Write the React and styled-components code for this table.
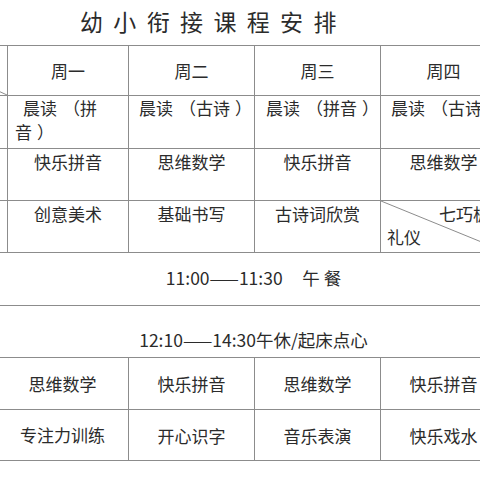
import React from "react";
import styled, { createGlobalStyle } from "styled-components";

const Global = createGlobalStyle`
  html, body { margin: 0; padding: 0; background: #fff; }
  body { width: 480px; height: 480px; overflow: hidden; }
  #root { width: 480px; height: 480px; overflow: hidden; }
`;

const LINE = "#8c8c8c";
const INK = "#2b2b2b";

const Page = styled.div`
  width: 507px;
  height: 480px;
  background: #fff;
  color: ${INK};
  font-family: "Noto Sans CJK SC", "Noto Sans", sans-serif;
`;

const Title = styled.h1`
  margin: 0;
  height: 45px;
  box-sizing: border-box;
  padding: 0 0 2px 80px;
  display: flex;
  align-items: center;
  font-size: 23px;
  font-weight: 400;
  letter-spacing: 2.6px;
  white-space: pre;
  line-height: 1;
`;

const Grid = styled.div`
  display: grid;
  grid-template-columns: ${(p) => p.$cols};
  grid-template-rows: ${(p) => p.$rows};
  border-top: ${(p) => (p.$top ? `1px solid ${LINE}` : "none")};
`;

const Cell = styled.div`
  box-sizing: border-box;
  border-right: 1px solid ${LINE};
  border-bottom: 1px solid ${LINE};
  font-size: 17px;
  line-height: 24px;
  display: flex;
  justify-content: ${(p) => (p.$left ? "flex-start" : "center")};
  align-items: ${(p) => (p.$middle ? "center" : "flex-start")};
  padding: ${(p) => p.$pad || "1px 0 0 0"};
  text-align: ${(p) => (p.$left ? "left" : "center")};
  white-space: nowrap;
  position: relative;
  overflow: hidden;
`;

const Lines = styled.div`
  text-indent: ${(p) => p.$indent || 0}px;
`;

const Paren = styled.span`
  padding-left: ${(p) => (p.$close ? 5 : 6)}px;
`;

const Diagonal = styled.svg`
  position: absolute;
  inset: 0;
  width: 100%;
  height: 100%;
  pointer-events: none;
`;

const SplitTop = styled.span`
  position: absolute;
  top: 1px;
  left: 58px;
`;

const SplitBottom = styled.span`
  position: absolute;
  bottom: 3px;
  left: 6px;
`;

const Band = styled.div`
  box-sizing: border-box;
  height: ${(p) => p.$h}px;
  border-bottom: 1px solid ${LINE};
  display: flex;
  justify-content: center;
  align-items: ${(p) => (p.$low ? "flex-end" : "center")};
  padding-bottom: ${(p) => (p.$low ? "5px" : "2px")};
  font-size: 17.5px;
  line-height: 24px;
  white-space: pre;
`;

const Dash = styled.span`
  letter-spacing: -3px;
  margin-right: 3px;
`;

const Corner = () => (
  <Diagonal preserveAspectRatio="none" viewBox="0 0 100 100">
    <line x1="0" y1="0" x2="100" y2="100" stroke={LINE} strokeWidth="1" vectorEffect="non-scaling-stroke" />
  </Diagonal>
);

export default function App() {
  return (
    <Page>
      <Global />
      <Title>幼 小 衔 接 课 程 安 排</Title>

      <Grid $top $cols="8px 121px 126px 126px 126px" $rows="50px 53px 52px 52px">
        <Cell>
          <Diagonal viewBox="0 0 8 50" preserveAspectRatio="none">
            <line x1="-60" y1="22" x2="8" y2="50" stroke={LINE} strokeWidth="1" vectorEffect="non-scaling-stroke" />
          </Diagonal>
        </Cell>
        <Cell $middle>周一</Cell>
        <Cell $middle>周二</Cell>
        <Cell $middle>周三</Cell>
        <Cell $middle>周四</Cell>

        <Cell />
        <Cell $left $pad="0 0 0 7px">
          <Lines $indent={8}>
            晨读<Paren>（</Paren>拼
            <br />
            音<Paren $close>）</Paren>
          </Lines>
        </Cell>
        <Cell $left $pad="0 0 0 10px">
          <Lines>
            晨读<Paren>（</Paren>古诗<Paren $close>）</Paren>
          </Lines>
        </Cell>
        <Cell $left $pad="0 0 0 11px">
          <Lines>
            晨读<Paren>（</Paren>拼音<Paren $close>）</Paren>
          </Lines>
        </Cell>
        <Cell $left $pad="0 0 0 10px">
          <Lines>
            晨读<Paren>（</Paren>古诗<Paren $close>）</Paren>
          </Lines>
        </Cell>

        <Cell />
        <Cell>快乐拼音</Cell>
        <Cell>思维数学</Cell>
        <Cell>快乐拼音</Cell>
        <Cell>思维数学</Cell>

        <Cell />
        <Cell>创意美术</Cell>
        <Cell>基础书写</Cell>
        <Cell>古诗词欣赏</Cell>
        <Cell>
          <Corner />
          <SplitTop>七巧板</SplitTop>
          <SplitBottom>礼仪</SplitBottom>
        </Cell>
      </Grid>

      <Band $h={53}>
        11:00<Dash>——</Dash>11:30{"     "}午 餐
      </Band>
      <Band $h={52} $low>
        12:10<Dash>——</Dash>14:30午休/起床点心
      </Band>

      <Grid $cols="129px 126px 126px 126px" $rows="52px 51px">
        <Cell $middle $pad="0 3px 0 0">思维数学</Cell>
        <Cell $middle>快乐拼音</Cell>
        <Cell $middle>思维数学</Cell>
        <Cell $middle>快乐拼音</Cell>
        <Cell $middle $pad="0 3px 0 0">专注力训练</Cell>
        <Cell $middle>开心识字</Cell>
        <Cell $middle>音乐表演</Cell>
        <Cell $middle>快乐戏水</Cell>
      </Grid>
    </Page>
  );
}
